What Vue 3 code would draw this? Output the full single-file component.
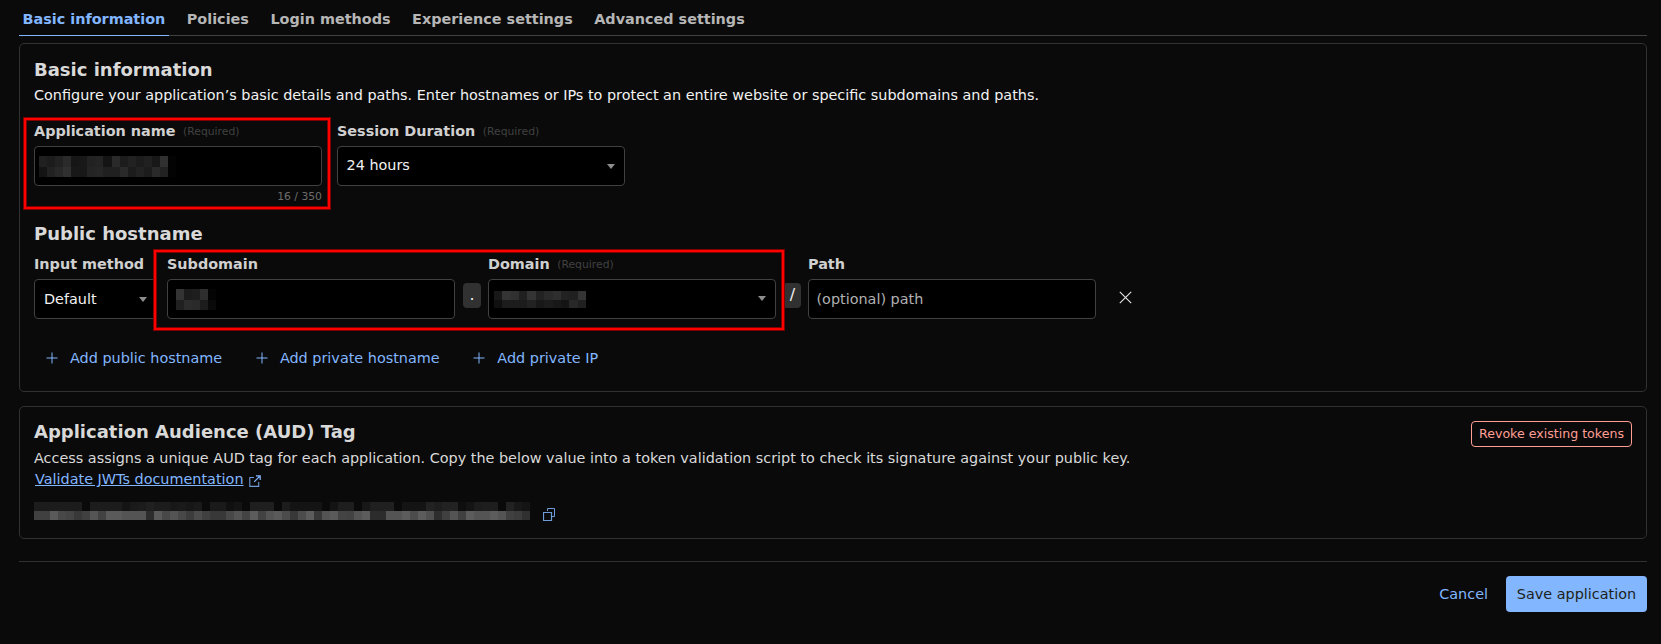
<script setup>
const tabs = ['Basic information', 'Policies', 'Login methods', 'Experience settings', 'Advanced settings']

// Redacted values: two rows of grey levels, two hex digits per cell
const masks = {
  name: { w: 8.06, h: [11, 10], rows: ['201c222a16182224142a1c221c20183003', '142228301818242620202a1c221c2a2203'] },
  sub: { w: 8, h: [11, 10], rows: ['341c1e2e04', '202c2a1c0a'] },
  domain: { w: 8.36, h: [9, 8], rows: ['1834302034222a2e222034', '101c1c1c22181c18142820'] },
  aud: {
    w: 8,
    h: [9, 9],
    rows: [
      '1c1c1c1c1c1c0a1c1c1c1c141a1c201c1c181a171a0a1a1a10140a1f1f1f0a1c141414140a141e1e0a172020200a141414221e22220e141c1e1e0a221814',
      '40405a4844384055425a5a5454542c5a4854483c4c4038384854445c42545a4c384c5c38545a4442545c2c2c54545c4c5c502e4054405c54545c54403c30'
    ]
  }
}

function cells(key) {
  const m = masks[key]
  const out = []
  let y = 0
  m.rows.forEach((row, r) => {
    row.match(/../g).forEach((v, i) => out.push({ x: i * m.w, y, w: m.w, h: m.h[r], fill: `#${v}${v}${v}` }))
    y += m.h[r]
  })
  return out
}
const width = (key) => Math.round(masks[key].rows[1].length / 2 * masks[key].w)
const height = (key) => masks[key].h[0] + masks[key].h[1]
const adds = ['Add public hostname', 'Add private hostname', 'Add private IP']
</script>

<template>
  <div class="page">
    <nav class="tabs">
      <a v-for="(t, i) in tabs" :key="t" class="tab" :class="{ active: i === 0 }">{{ t }}</a>
    </nav>

    <section class="panel basic">
      <h2>Basic information</h2>
      <p class="lead">Configure your application’s basic details and paths. Enter hostnames or IPs to protect an entire website or specific subdomains and paths.</p>
      <div class="row first">
        <div class="field">
          <label>Application name <small>(Required)</small></label>
          <div class="input pad-name">
            <svg :width="width('name')" :height="height('name')" shape-rendering="crispEdges"><rect v-for="(c, i) in cells('name')" :key="i" :x="c.x" :y="c.y" :width="c.w" :height="c.h" :fill="c.fill" /></svg>
          </div>
          <div class="counter">16 / 350</div>
        </div>
        <div class="field">
          <label>Session Duration <small>(Required)</small></label>
          <div class="input select session"><span>24 hours</span><i class="caret"></i></div>
        </div>
      </div>

      <h2 class="public">Public hostname</h2>
      <div class="row hosts">
        <div class="field method">
          <label>Input method</label>
          <div class="input select"><span>Default</span><i class="caret"></i></div>
        </div>
        <div class="field">
          <label>Subdomain</label>
          <div class="input pad-sub">
            <svg :width="width('sub')" :height="height('sub')" shape-rendering="crispEdges"><rect v-for="(c, i) in cells('sub')" :key="i" :x="c.x" :y="c.y" :width="c.w" :height="c.h" :fill="c.fill" /></svg>
          </div>
        </div>
        <span class="sep">.</span>
        <div class="field">
          <label>Domain <small>(Required)</small></label>
          <div class="input select pad-domain">
            <svg :width="width('domain')" :height="height('domain')" shape-rendering="crispEdges"><rect v-for="(c, i) in cells('domain')" :key="i" :x="c.x" :y="c.y" :width="c.w" :height="c.h" :fill="c.fill" /></svg>
            <i class="caret raised"></i>
          </div>
        </div>
        <span class="sep slash">/</span>
        <div class="field">
          <label>Path</label>
          <div class="input pad-path"><span>(optional) path</span></div>
        </div>
        <svg class="close" width="13" height="13" viewBox="0 0 13 13"><path d="M.8.8l11.4 11.4M12.2.8L.8 12.2" stroke="#e8e8e8" stroke-width="1.1" fill="none" /></svg>
      </div>
      <div class="adds">
        <a v-for="a in adds" :key="a">
          <svg width="12" height="12" viewBox="0 0 12 12"><path d="M6 .5v11M.5 6h11" stroke="#82b6ff" stroke-width="1" fill="none" /></svg>{{ a }}
        </a>
      </div>
    </section>

    <section class="panel aud">
      <div class="audhead">
        <h2>Application Audience (AUD) Tag</h2>
        <button class="revoke">Revoke existing tokens</button>
      </div>
      <p class="desc">Access assigns a unique AUD tag for each application. Copy the below value into a token validation script to check its signature against your public key.</p>
      <div class="doc">
        <a>Validate JWTs documentation</a>
        <svg width="12" height="12" viewBox="0 0 12 12"><path d="M5 2.5H.8v8.9h8.9V7" stroke="#6f9bd8" stroke-width="1.1" fill="none" /><path d="M7 .8h4.2V5M11 1L5.2 6.8" stroke="#82b6ff" stroke-width="1.2" fill="none" /></svg>
      </div>
      <div class="token">
        <svg :width="width('aud')" :height="height('aud')" shape-rendering="crispEdges"><rect v-for="(c, i) in cells('aud')" :key="i" :x="c.x" :y="c.y" :width="c.w" :height="c.h" :fill="c.fill" /></svg>
        <svg class="copy" width="13" height="13" viewBox="0 0 13 13"><path d="M.5 4.5h8v8h-8z" stroke="#6f9bd8" stroke-width="1.2" fill="none" /><path d="M4.5 3v-2.5h7v8H9" stroke="#6f9bd8" stroke-width="1" fill="none" /></svg>
      </div>
    </section>

    <footer>
      <a>Cancel</a>
      <button class="save">Save application</button>
    </footer>

    <div class="mark mark-name"></div>
    <div class="mark mark-host"></div>
  </div>
</template>

<style>
body { background: #0a0a0a; }
</style>

<style scoped>
* { box-sizing: border-box; }
.page { position: relative; height: 644px; padding: 0 14px 0 19px; background: #0a0a0a; color: #d9d9d9; font: 14.4px/20px "DejaVu Sans", sans-serif; overflow: hidden; }
h2 { margin: 0; font-size: 18px; line-height: 22px; font-weight: 700; color: #d9d9d9; }
p { margin: 0; white-space: nowrap; }
.tabs { display: flex; gap: 14.5px; height: 36px; border-bottom: 1px solid #414141; }
.tab { height: 36px; padding: 9px 3.5px 0; font-weight: 700; color: #b6b6b6; white-space: nowrap; }
.tab.active { color: #82b6ff; border-bottom: 1px solid #82b6ff; }
.panel { border: 1px solid #313131; border-radius: 5px; padding: 0 14px; }
.basic { margin-top: 7px; height: 349px; padding-top: 15px; }
.lead { margin-top: 4px; color: #f2f2f2; }
.row { display: flex; }
.first { gap: 15px; margin-top: 16px; height: 82px; }
.field { width: 288px; flex: none; }
label { display: block; height: 20px; font-weight: 700; color: #d0d0d0; white-space: nowrap; }
small { margin-left: 2.5px; font-size: 10.8px; font-weight: 400; color: #414141; position: relative; top: -1.5px; }
.input { display: flex; align-items: center; height: 40px; margin-top: 5px; border: 1px solid #414141; border-radius: 4px; background: #000; color: #f2f2f2; white-space: nowrap; }
.select { justify-content: space-between; padding: 0 9px; }
.session span { margin-left: -0.5px; padding-bottom: 2px; }
.pad-name { padding-left: 4px; }
.pad-sub { padding-left: 8px; }
.pad-domain { padding-left: 5px; }
.pad-path { padding-left: 7.5px; color: #b0b0b0; }
.caret { border: 4px solid transparent; border-top: 5px solid #8d8d8d; border-bottom: 0; }
.raised { margin-bottom: 2px; }
.counter { padding-top: 1px; text-align: right; font-size: 10.8px; color: #6d6d6d; }
.public { margin-top: 20px; }
.hosts { margin-top: 9px; height: 60px; }
.method { width: 123px; margin-right: 10px; }
.sep { flex: none; width: 18px; height: 25px; margin: 29px 7px 0 8px; border-radius: 4px; background: #313131; color: #f2f2f2; font-size: 16px; line-height: 23px; text-align: center; }
.slash { margin-left: 7px; padding-left: 1px; }
.close { margin: 37px 0 0 23px; }
.adds { display: flex; gap: 33.7px; margin: 34px 0 0 12px; color: #82b6ff; }
.adds a { display: flex; align-items: center; gap: 12px; white-space: nowrap; }
.aud { margin-top: 14px; height: 133px; padding-top: 14px; }
.audhead { display: flex; justify-content: space-between; height: 26px; }
button { font-family: inherit; white-space: nowrap; padding: 0; }
.revoke { width: 161px; height: 26px; padding-bottom: 2px; border: 1px solid #ff9e94; border-radius: 4px; background: none; color: #ff9e94; font-size: 12.6px; }
.desc { margin-top: 1px; line-height: 20px; }
.doc { display: flex; align-items: center; gap: 5px; margin: 1px 0 0 1px; height: 20px; color: #82b6ff; }
.doc a { text-decoration: underline; }
.doc svg { margin-top: 3px; }
.token { display: flex; margin-top: 13px; }
.copy { margin: 6px 0 0 13px; }
footer { display: flex; align-items: flex-start; justify-content: flex-end; gap: 18px; margin-top: 22px; padding-top: 14px; border-top: 1px solid #313131; color: #82b6ff; }
footer a { line-height: 36px; }
.save { width: 141px; height: 36px; border: 0; border-radius: 4px; background: #82b6ff; color: #1d1f20; font-size: 14.4px; }
.mark { position: absolute; border: 2px solid #f00; box-shadow: 0 0 0 1px #800000, inset 0 0 0 1px #800000; }
.mark-name { left: 24px; top: 118px; width: 306px; height: 91px; }
.mark-host { left: 154px; top: 250px; width: 630px; height: 80px; }
</style>
